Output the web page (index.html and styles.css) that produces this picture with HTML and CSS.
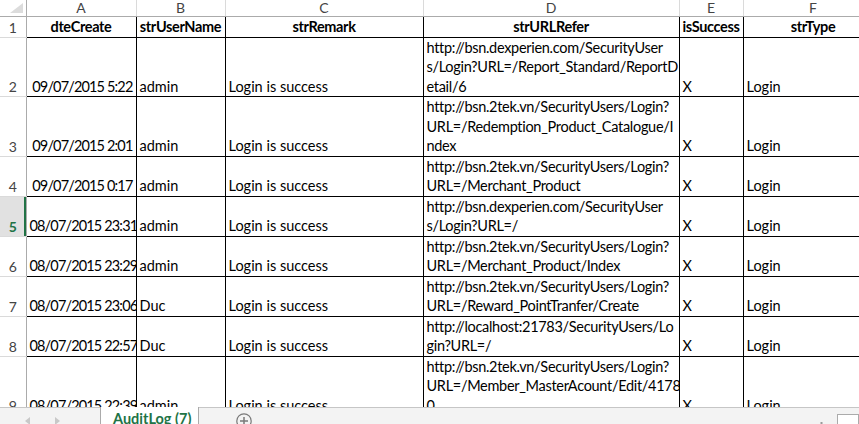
FILE: index.html
```html
<!DOCTYPE html>
<html lang="en">
<head>
  <meta charset="UTF-8" />
  <title>AuditLog (7)</title>
  <link rel="stylesheet" href="styles.css">
</head>
<body>
  <div class="sheet">
    <table class="grid">
      <colgroup>
        <col class="c-hdr"><col class="c-a"><col class="c-b"><col class="c-c"><col class="c-d"><col class="c-e"><col class="c-f">
      </colgroup>
      <thead>
        <tr class="letters">
          <th class="corner"><div class="corner-box"><span class="tri"></span></div></th>
          <th>A</th><th>B</th><th>C</th><th>D</th><th>E</th><th>F</th>
        </tr>
      </thead>
      <tbody>
        <tr class="h1">
          <th class="rn">1</th>
          <td class="title">dteCreate</td>
          <td class="title">strUserName</td>
          <td class="title">strRemark</td>
          <td class="title">strURLRefer</td>
          <td class="title">isSuccess</td>
          <td class="title">strType</td>
        </tr>
        <tr class="h3">
          <th class="rn">2</th>
          <td class="num">09/07/2015 5:22</td>
          <td>admin</td>
          <td>Login is success</td>
          <td class="url">http://bsn.dexperien.com/SecurityUser<br>s/Login?URL=/Report_Standard/ReportD<br>etail/6</td>
          <td>X</td>
          <td>Login</td>
        </tr>
        <tr class="h3">
          <th class="rn">3</th>
          <td class="num">09/07/2015 2:01</td>
          <td>admin</td>
          <td>Login is success</td>
          <td class="url">http://bsn.2tek.vn/SecurityUsers/Login?<br>URL=/Redemption_Product_Catalogue/I<br>ndex</td>
          <td>X</td>
          <td>Login</td>
        </tr>
        <tr class="h2">
          <th class="rn">4</th>
          <td class="num">09/07/2015 0:17</td>
          <td>admin</td>
          <td>Login is success</td>
          <td class="url">http://bsn.2tek.vn/SecurityUsers/Login?<br>URL=/Merchant_Product</td>
          <td>X</td>
          <td>Login</td>
        </tr>
        <tr class="h2">
          <th class="rn selected">5</th>
          <td class="num">08/07/2015 23:31</td>
          <td>admin</td>
          <td>Login is success</td>
          <td class="url">http://bsn.dexperien.com/SecurityUser<br>s/Login?URL=/</td>
          <td>X</td>
          <td>Login</td>
        </tr>
        <tr class="h2">
          <th class="rn">6</th>
          <td class="num">08/07/2015 23:29</td>
          <td>admin</td>
          <td>Login is success</td>
          <td class="url">http://bsn.2tek.vn/SecurityUsers/Login?<br>URL=/Merchant_Product/Index</td>
          <td>X</td>
          <td>Login</td>
        </tr>
        <tr class="h2">
          <th class="rn">7</th>
          <td class="num">08/07/2015 23:06</td>
          <td>Duc</td>
          <td>Login is success</td>
          <td class="url">http://bsn.2tek.vn/SecurityUsers/Login?<br>URL=/Reward_PointTranfer/Create</td>
          <td>X</td>
          <td>Login</td>
        </tr>
        <tr class="h2">
          <th class="rn">8</th>
          <td class="num">08/07/2015 22:57</td>
          <td>Duc</td>
          <td>Login is success</td>
          <td class="url">http://localhost:21783/SecurityUsers/Lo<br>gin?URL=/</td>
          <td>X</td>
          <td>Login</td>
        </tr>
        <tr class="h3">
          <th class="rn">9</th>
          <td class="num">08/07/2015 22:39</td>
          <td>admin</td>
          <td>Login is success</td>
          <td class="url">http://bsn.2tek.vn/SecurityUsers/Login?<br>URL=/Member_MasterAcount/Edit/4178<br>0</td>
          <td>X</td>
          <td>Login</td>
        </tr>
      </tbody>
    </table>
  </div>

  <div class="tabbar">
    <div class="nav">
      <svg width="6" height="8" viewBox="0 0 6 8"><path d="M5 0 L0 4 L5 8 Z" fill="#c8c8c8"/></svg>
      <svg width="6" height="8" viewBox="0 0 6 8"><path d="M1 0 L6 4 L1 8 Z" fill="#c8c8c8"/></svg>
    </div>
    <div class="tab active">AuditLog (7)</div>
    <div class="add">
      <svg width="16" height="16" viewBox="0 0 16 16">
        <circle cx="8" cy="8" r="7.2" fill="none" stroke="#7a7a7a" stroke-width="1.2"/>
        <path d="M8 4 V12 M4 8 H12" stroke="#7a7a7a" stroke-width="1.5"/>
      </svg>
    </div>
    <div class="spacer"></div>
    <div class="dots">
      <svg width="3" height="8" viewBox="0 0 3 8">
        <rect x="0.5" y="0" width="2" height="2" fill="#9a9a9a"/>
        <rect x="0.5" y="6" width="2" height="2" fill="#9a9a9a"/>
      </svg>
    </div>
    <div class="hscroll">
      <svg width="5" height="8" viewBox="0 0 5 8"><path d="M4 0 L0 4 L4 8 Z" fill="#6d6d6d"/></svg>
    </div>
  </div>
</body>
</html>
```

FILE: styles.css
```css
html, body {
  margin: 0;
  height: 100%;
  overflow: hidden;
  background: #fff;
}

body {
  font-family: Lato, "Liberation Sans", sans-serif;
  font-size: 14.5px;
  color: #000;
}

.sheet {
  height: 407px;
  overflow: hidden;
}

.grid {
  border-collapse: collapse;
  table-layout: fixed;
  width: 883px;
}

.c-hdr { width: 26px; }
.c-a { width: 110px; }
.c-b { width: 89px; }
.c-c { width: 198px; }
.c-d { width: 256px; }
.c-e { width: 64px; }
.c-f { width: 140px; }

/* column letters */
.letters th {
  height: 16px;
  padding: 0;
  font-weight: normal;
  font-size: 14px;
  line-height: 16px;
  color: #444;
  background: #fff;
  border-left: 1px solid #dadada;
  border-right: 1px solid #dadada;
  border-bottom: 1px solid #ababab;
  text-align: center;
  vertical-align: middle;
}

.letters th.corner {
  border-left: none;
  border-right: 1px solid #ababab;
}

.corner-box {
  height: 16px;
  display: flex;
  justify-content: flex-end;
  align-items: flex-end;
  padding: 0 3px 3px 0;
  box-sizing: border-box;
}

.tri {
  width: 0;
  height: 0;
  border-left: 13px solid transparent;
  border-bottom: 10px solid #dcdcdc;
}

/* row numbers */
.rn {
  padding: 0;
  font-weight: normal;
  font-size: 14px;
  color: #444;
  background: #fff;
  text-align: center;
  vertical-align: bottom;
  line-height: 19px;
  border-right: 1px solid #ababab;
  border-bottom: 1px solid #dadada;
}

.rn.selected {
  background: #e1e1e1;
  color: #217346;
  font-weight: bold;
  box-shadow: inset -2px 0 0 #217346;
}

.h1 { height: 19px; }
.h2 { height: 39px; }
.h3 { height: 59px; }

.grid td {
  border: 1px solid #000;
  padding: 0 2px 0 3px;
  line-height: 19.5px;
  vertical-align: bottom;
  white-space: nowrap;
  overflow: hidden;
}

.grid td.title {
  font-weight: bold;
  text-align: center;
  letter-spacing: -0.35px;
  padding: 0;
}

.grid td.num {
  text-align: right;
  letter-spacing: -0.85px;
  padding-right: 3px;
}

.grid td.url {
  letter-spacing: -0.3px;
}

/* sheet tabs */
.tabbar {
  height: 26px;
  display: flex;
  align-items: flex-start;
  background: #f3f3f3;
  border-top: 1px solid #c6c6c6;
}

.nav {
  width: 100px;
  display: flex;
  gap: 23px;
  padding: 9px 0 0 25px;
  box-sizing: border-box;
}

.tab {
  width: 99px;
  height: 26px;
  margin-top: -1px;
  padding: 2px 0 0 12px;
  box-sizing: border-box;
  border-left: 1px solid #ababab;
  border-right: 1px solid #ababab;
  line-height: 20px;
}

.tab.active {
  background: #fff;
  color: #217346;
  font-weight: bold;
}

.add {
  padding: 5px 0 0 37px;
}

.spacer {
  flex: 1;
}

.dots {
  padding: 8px 0 0 0;
  margin-right: 14px;
}

.hscroll {
  width: 22px;
  height: 20px;
  margin-top: 6px;
  border: 1px solid #ababab;
  background: #fff;
  box-sizing: border-box;
  padding: 4px 0 0 5px;
}
```
